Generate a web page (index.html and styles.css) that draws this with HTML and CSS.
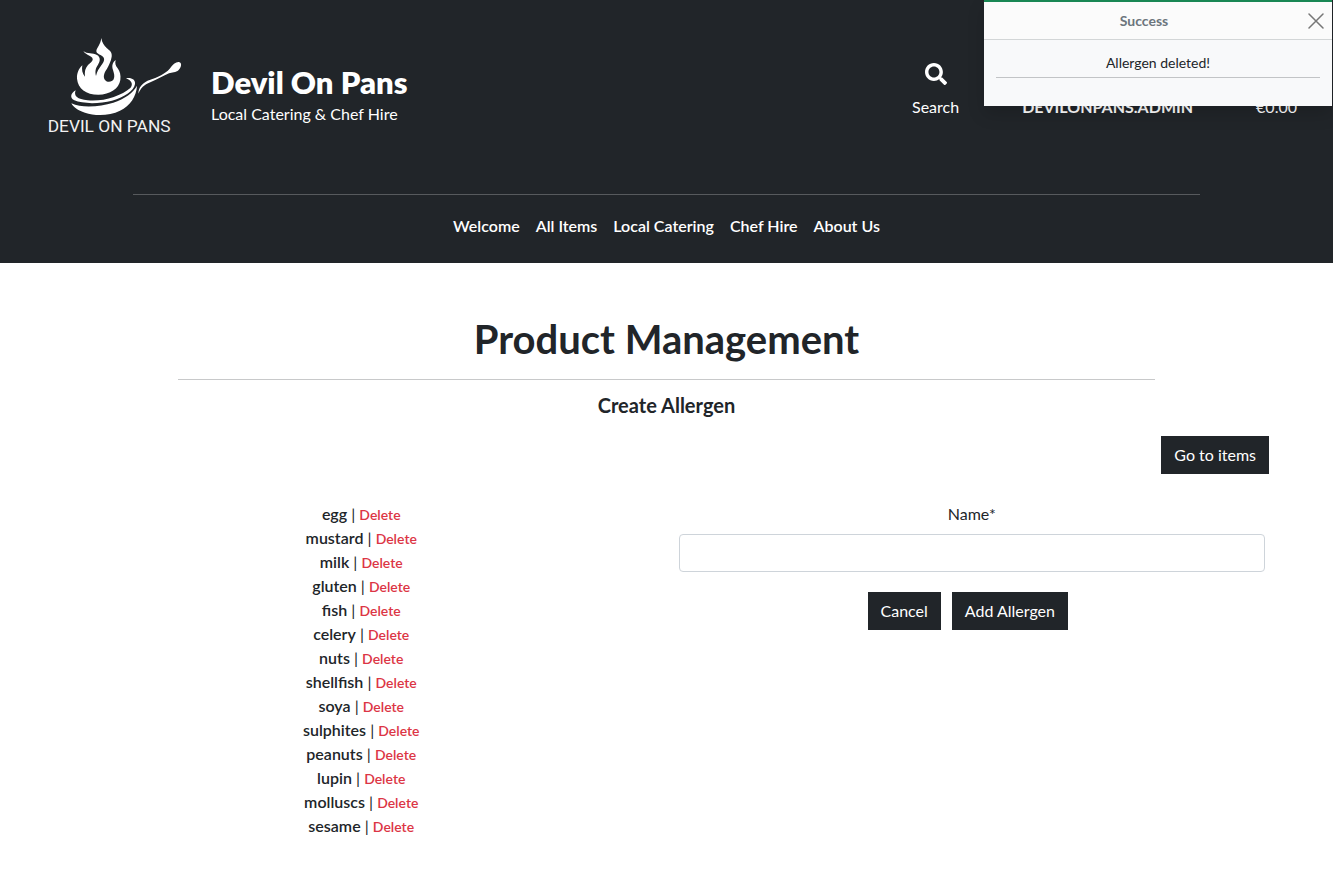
FILE: index.html
```html
<!DOCTYPE html>
<html lang="en">
<head>
<meta charset="utf-8">
<meta name="viewport" content="width=device-width, initial-scale=1">
<title>Devil On Pans</title>
<link rel="stylesheet" href="styles.css">
</head>
<body>
<header class="site-header">
  <div class="top-bar">
    <a class="brand" href="#">
      <svg class="logo" viewBox="0 0 510 390" role="img" aria-label="Devil On Pans logo">
        <g fill="#fff">
          <path d="M214 54C216 68 222 76 230 84C240 92 247 98 245 110C243 124 236 136 231 146C221 160 219 172 225 180C232 189 247 186 251 178C255 168 252 160 249 150C245 138 247 128 257 120C254 130 257 138 263 145C270 154 273 166 271 180C267 206 240 224 205 224C168 224 144 206 141 176C140 160 146 146 157 136C155 148 156 160 165 170C163 155 166 144 174 135C181 128 189 124 188 117C186 106 170 108 160 93C172 103 188 98 201 105C212 111 211 124 204 134C196 146 195 154 198 168C201 154 207 146 214 136C221 126 226 118 219 110C212 104 200 102 199 94C199 84 212 74 214 54Z"/>
          <path d="M137 211C130 228 142 238 173 241C218 246 274 228 301 204C310 194 306 182 288 175C304 172 317 179 315 192C312 212 284 231 246 242C209 252 157 252 133 241C117 233 124 218 137 211Z"/>
          <path d="M124 250C156 265 209 261 250 248C284 237 310 218 321 197C319 229 301 257 270 272C238 288 195 288 165 278C143 271 130 262 124 250Z"/>
          <path d="M325 221C325 202 337 187 361 179C384 171 405 162 419 146C428 133 438 125 447 126C456 128 455 141 446 150C437 159 426 156 417 160C397 169 382 178 361 187C342 194 332 205 325 221Z"/>
        </g>
        <text class="logo-text" x="53" y="335">DEVIL ON PANS</text>
      </svg>
      <span class="brand-copy">
        <strong class="brand-name">Devil On Pans</strong>
        <span>Local Catering &amp; Chef Hire</span>
      </span>
    </a>
    <nav class="tools" aria-label="Account">
      <a class="tool" href="#">
        <svg class="tool-icon" viewBox="0 0 512 512" aria-hidden="true"><path fill="currentColor" d="M505 442.700 405.300 343c-4.500-4.500-10.600-7-17-7H372c27.600-35.300 44-79.700 44-128C416 93.100 322.900 0 208 0S0 93.100 0 208s93.100 208 208 208c48.300 0 92.700-16.400 128-44v16.300c0 6.400 2.500 12.500 7 17l99.700 99.700c9.400 9.400 24.600 9.400 33.900 0l28.300-28.300c9.400-9.400 9.400-24.600.1-34zM208 336c-70.700 0-128-57.200-128-128 0-70.700 57.200-128 128-128 70.700 0 128 57.200 128 128 0 70.700-57.200 128-128 128z"/></svg>
        <span>Search</span>
      </a>
      <a class="tool account" href="#">DEVILONPANS.ADMIN</a>
      <a class="tool" href="#">€0.00</a>
    </nav>
  </div>
  <hr class="header-rule">
  <nav class="menu" aria-label="Main">
    <a href="#">Welcome</a>
    <a href="#">All Items</a>
    <a href="#">Local Catering</a>
    <a href="#">Chef Hire</a>
    <a href="#">About Us</a>
  </nav>
</header>

<main class="page">
  <h1>Product Management</h1>
  <hr class="page-rule">
  <h2>Create Allergen</h2>
  <div class="actions"><a class="btn" href="#">Go to items</a></div>
  <div class="columns">
    <ul class="allergens">
      <li><b>egg</b> | <a href="#">Delete</a></li>
      <li><b>mustard</b> | <a href="#">Delete</a></li>
      <li><b>milk</b> | <a href="#">Delete</a></li>
      <li><b>gluten</b> | <a href="#">Delete</a></li>
      <li><b>fish</b> | <a href="#">Delete</a></li>
      <li><b>celery</b> | <a href="#">Delete</a></li>
      <li><b>nuts</b> | <a href="#">Delete</a></li>
      <li><b>shellfish</b> | <a href="#">Delete</a></li>
      <li><b>soya</b> | <a href="#">Delete</a></li>
      <li><b>sulphites</b> | <a href="#">Delete</a></li>
      <li><b>peanuts</b> | <a href="#">Delete</a></li>
      <li><b>lupin</b> | <a href="#">Delete</a></li>
      <li><b>molluscs</b> | <a href="#">Delete</a></li>
      <li><b>sesame</b> | <a href="#">Delete</a></li>
    </ul>
    <form class="allergen-form">
      <label for="name">Name*</label>
      <input id="name" name="name" type="text" required>
      <div class="form-buttons">
        <a class="btn" href="#">Cancel</a>
        <button class="btn" type="submit">Add Allergen</button>
      </div>
    </form>
  </div>
</main>

<div class="toast" role="status">
  <div class="toast-header">
    <strong>Success</strong>
    <button class="toast-close" type="button" aria-label="Close">
      <svg viewBox="0 0 16 16" aria-hidden="true"><path d="M1 1 15 15M15 1 1 15" fill="none" stroke="currentColor" stroke-width="1.500" stroke-linecap="round"/></svg>
    </button>
  </div>
  <div class="toast-body">
    <p>Allergen deleted!</p>
    <hr>
  </div>
</div>
</body>
</html>
```
FILE: styles.css
```css
* { box-sizing: border-box; }

body {
  margin: 0;
  background: #fff;
  color: #212529;
  font: 400 16px/24px Lato, "Liberation Sans", sans-serif;
}

a { color: inherit; text-decoration: none; }
hr { margin: 0; border: 0; height: 1px; }

.site-header { background: #212529; color: #fff; padding-bottom: 25px; }

.top-bar {
  display: flex;
  justify-content: space-between;
  align-items: flex-start;
  padding: 20px 36px 44px 30px;
}

.brand { display: flex; align-items: flex-start; gap: 11px; }
.logo { width: 170px; height: 130px; }
.logo-text { font: 400 52px Roboto, sans-serif; fill: #f2f2f2; }
.brand-copy { display: flex; flex-direction: column; padding-top: 42px; }
.brand-name { font-size: 31px; line-height: 40px; font-weight: 800; }

.tools { display: flex; align-items: flex-end; gap: 63px; padding-top: 43px; }
.tool { display: flex; flex-direction: column; align-items: center; gap: 10px; }
.tool-icon { width: 22px; height: 22px; }
.account { font-weight: 700; }

.header-rule { width: 80%; margin: 0 auto; background: #575a5d; }

.menu {
  display: flex;
  justify-content: center;
  gap: 16px;
  padding: 19px 0 0;
  font-weight: 600;
}

.page { padding: 52px 56px 48px; text-align: center; }
h1 { margin: 0; font-size: 40px; line-height: 48px; font-weight: 700; }
.page-rule { width: 80%; margin: 16px auto 12px; background: #c8c9ca; }
h2 { margin: 0; font-size: 20px; line-height: 26px; font-weight: 700; }

.actions { display: flex; justify-content: flex-end; padding: 18px 8px 0 0; }
.btn {
  display: inline-block;
  padding: 6px 12px;
  border: 1px solid #212529;
  background: #212529;
  color: #fff;
  font: inherit;
}

.columns { display: grid; grid-template-columns: 1fr 1fr; margin-top: 28px; }
.allergens { margin: 0; padding: 0 12px; list-style: none; }
.allergens b { font-weight: 600; }
.allergens a { color: #dc3545; font-size: 14px; line-height: 16px; font-weight: 600; }

.allergen-form { padding: 0 12px; }
.allergen-form label { display: block; margin-bottom: 8px; }
.allergen-form input {
  display: block;
  width: 100%;
  height: 38px;
  padding: 6px 12px;
  border: 1px solid #ced4da;
  border-radius: 4px;
  font: inherit;
}
.form-buttons { display: flex; justify-content: center; gap: 11px; margin: 20px 8px 0 0; }

.toast {
  position: absolute;
  top: 0;
  right: 1px;
  width: 348px;
  border-top: 2px solid #198754;
  background: #f8f9fa;
  box-shadow: 0 8px 16px rgba(0, 0, 0, 0.15);
  font-size: 14px;
  text-align: center;
}
.toast-header {
  display: flex;
  align-items: center;
  gap: 4px;
  height: 38px;
  padding-right: 8px;
  border-bottom: 1px solid #d3d6d7;
  background: #fbfbfb;
  color: #6c757d;
}
.toast-header strong { flex: 1; }
.toast-close { display: flex; padding: 0; border: 0; background: none; color: #777; }
.toast-close svg { width: 16px; height: 16px; }
.toast-body { padding: 12px 12px 28px; }
.toast-body p { margin: 0 0 4px; line-height: 21px; }
.toast-body hr { background: #c2c4c6; }
```
